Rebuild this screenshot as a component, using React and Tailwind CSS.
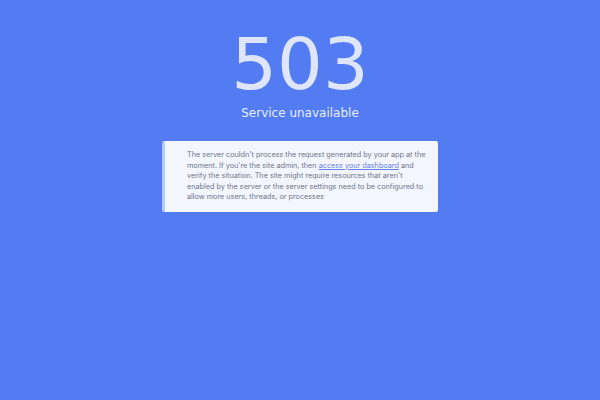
export default function App() {
  return (
    <div className="w-[600px] h-[400px] bg-[#537bf2] flex flex-col items-center" style={{ fontFamily: '"DejaVu Sans", sans-serif' }}>
      <div className="mt-[26px] text-[72px] leading-[76px] text-[#dfe6fc]" style={{ fontFamily: '"DejaVu Sans", sans-serif' }}>503</div>
      <div className="mt-[3px] text-[12px] leading-[16px] text-[#e8edfd]">Service unavailable</div>
      <div className="mt-[20px] w-[276px] h-[71px] bg-[#f3f6fe] border-l-[3px] border-[#b9c9f8] rounded-[2px] pl-[22px] pr-[10px] pt-[9px]">
        <p className="text-[7.25px] leading-[10.5px] text-[#6f7589]" style={{ fontFamily: 'Inter, sans-serif' }}>
          The server couldn't process the request generated by your app at the moment. If you're the site admin, then{' '}
          <a className="underline text-[#6382e2]">access your dashboard</a> and verify the situation. The site might require resources that aren't enabled by the server or the server settings need to be configured to allow more users, threads, or processes
        </p>
      </div>
    </div>
  );
}
